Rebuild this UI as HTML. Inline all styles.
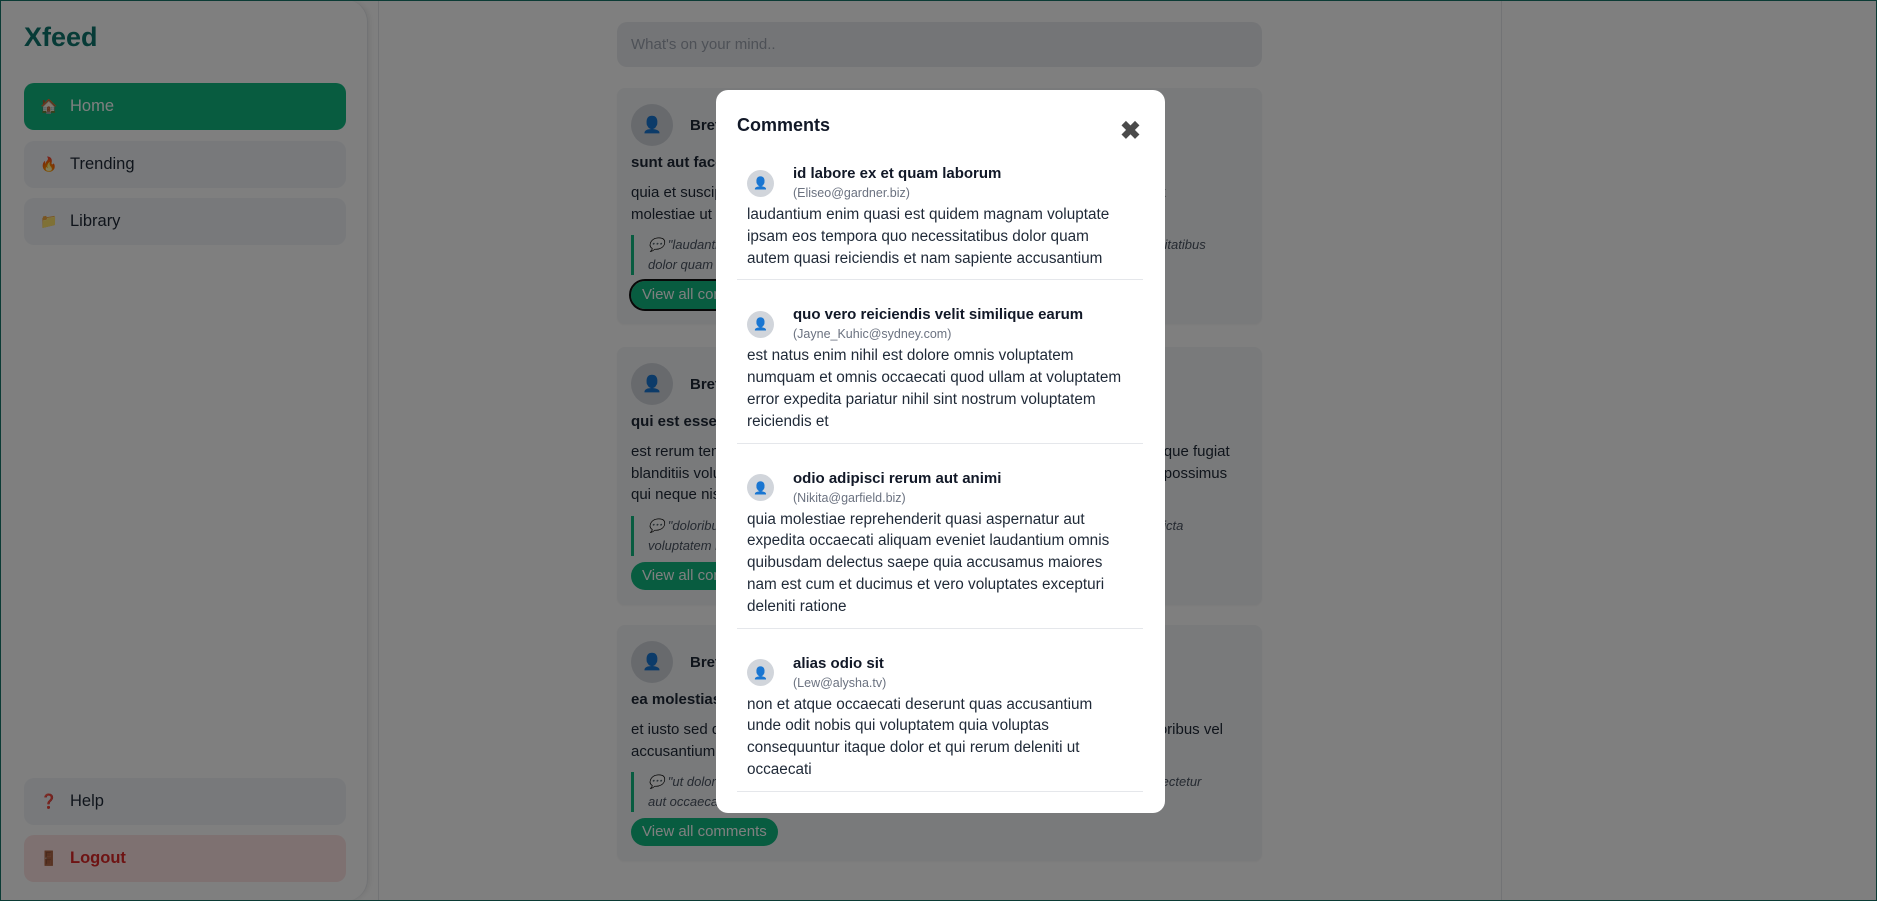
<!DOCTYPE html>
<html><head><meta charset="utf-8"><style>
*{box-sizing:border-box;margin:0;padding:0}
html,body{width:1877px;height:901px;overflow:hidden;background:#fff;font-family:"Liberation Sans",sans-serif;color:#1f2937}
.frame{position:absolute;inset:0;border:1px solid #0b3b35;z-index:50;pointer-events:none}
.side{position:absolute;left:0;top:0;width:368px;height:901px;background:#fff;border-radius:0 22px 22px 0;box-shadow:2px 0 6px rgba(0,0,0,.08);border-right:1px solid #e5e7eb}
.logo{position:absolute;left:24px;top:22px;font-size:27px;font-weight:bold;color:#0f766e}
.nav{position:absolute;left:24px;width:322px;height:47px;border-radius:10px;background:#f1f3f6;font-size:16.5px;line-height:47px;padding-left:16px}
.nav i{font-style:normal;display:inline-block;width:30px;font-size:14px}
.main{position:absolute;left:378px;top:0;width:1124px;height:901px;border-left:1px solid #e5e7eb;border-right:1px solid #e5e7eb}
.inp{position:absolute;left:617px;top:22px;width:645px;height:45px;background:#e9ebee;border-radius:10px;font-size:15px;color:#9ca3af;line-height:45px;padding-left:14px}
.card{position:absolute;left:617px;width:645px;background:#f3f4f6;border-radius:8px;padding:16px 14px 15px;box-shadow:0 1px 2px rgba(0,0,0,.05)}
.hd{height:42px;display:flex;align-items:center}
.av{width:42px;height:42px;border-radius:50%;background:#d1d5db;display:flex;align-items:center;justify-content:center;font-size:16px;color:#1d6fd1}
.nm{margin-left:17px;font-weight:bold;font-size:15px}
.tt{margin-top:7px;font-weight:bold;font-size:15px;line-height:20px;white-space:nowrap}
.bd{margin-top:9px;font-size:15px;line-height:21.5px;white-space:nowrap}
.q{margin-top:10px;border-left:3px solid #10b981;padding-left:14px;font-style:italic;font-size:13px;line-height:20px;color:#4b5563;white-space:nowrap}
.btn{margin-top:6px;display:inline-block;height:28px;line-height:28px;padding:0 11px;border-radius:14px;background:#10b981;color:#fff;font-size:15px}
.ov{position:absolute;inset:0;background:rgba(0,0,0,.5)}
.modal{position:absolute;left:716px;top:90px;width:449px;height:723px;background:#fff;border-radius:12px;padding:23px 22px 0 21px}
.mt{font-size:18px;font-weight:bold;line-height:24px;color:#111827;margin-bottom:2px}
.x{position:absolute;left:1120px;top:118px;font-size:25px;color:#4b4b4b;line-height:26px;font-weight:bold}
.c{border-bottom:1px solid #e5e7eb;padding:25px 0 10px 10px}
.ch{display:flex;align-items:center;height:38px;margin-bottom:2px}
.ca{width:27px;height:27px;border-radius:50%;background:#d1d5db;display:flex;align-items:center;justify-content:center;font-size:12px;color:#1d6fd1}
.cn{margin-left:19px}
.cn b{display:block;font-size:15px;line-height:20px;color:#111827}
.cn span{display:block;font-size:12.5px;line-height:18px;color:#6b7280}
.cb{font-size:15.3px;line-height:21.8px;white-space:nowrap;color:#1f2937}
</style></head><body>
<div class="side">
<div class="logo">Xfeed</div>
<div class="nav" style="top:83px;background:#10b981;color:#fff"><i>🏠</i>Home</div>
<div class="nav" style="top:141px"><i>🔥</i>Trending</div>
<div class="nav" style="top:198px"><i>📁</i>Library</div>
<div class="nav" style="top:778px"><i style="color:#dc2626">❓</i>Help</div>
<div class="nav" style="top:835px;background:#fde2e2;color:#dc2626;font-weight:bold"><i>🚪</i>Logout</div>
</div>
<div class="main"></div>
<div class="inp">What's on your mind..</div>
<div class="card" style="top:88px">
<div class="hd"><div class="av">👤</div><div class="nm">Bret</div></div>
<div class="tt">sunt aut facere repellat provident occaecati excepturi optio reprehenderit</div>
<div class="bd">quia et suscipit suscipit recusandae consequuntur expedita et cum reprehenderit<br>molestiae ut ut quas totam nostrum rerum est autem sunt rem eveniet architecto</div>
<div class="q">💬 "laudantium enim quasi est quidem magnam voluptate ipsam eos tempora quo necessitatibus<br>dolor quam autem quasi reiciendis..."</div>
<div class="btn" style="outline:2px solid #111;outline-offset:0">View all comments</div>
</div>
<div class="card" style="top:347px">
<div class="hd"><div class="av">👤</div><div class="nm">Bret</div></div>
<div class="tt">qui est esse</div>
<div class="bd">est rerum tempore vitae sequi sint nihil reprehenderit dolor beatae ea dolores neque fugiat<br>blanditiis voluptate porro vel nihil molestiae ut reiciendis qui aperiam non debitis possimus<br>qui neque nisi nulla</div>
<div class="q">💬 "doloribus at sed quis culpa deserunt consectetur qui praesentium accusamus fugiat dicta<br>voluptatem rerum ut voluptate..."</div>
<div class="btn">View all comments</div>
</div>
<div class="card" style="top:625px">
<div class="hd"><div class="av">👤</div><div class="nm">Bret</div></div>
<div class="tt">ea molestias quasi exercitationem repellat qui ipsa sit aut</div>
<div class="bd">et iusto sed quo iure voluptatem occaecati omnis eligendi aut ad voluptatem doloribus vel<br>accusantium quis pariatur molestiae porro eius odio et labore et velit aut</div>
<div class="q">💬 "ut dolorum nostrum id quia aut est fuga est inventore vel eligendi explicabo quis consectetur<br>aut occaecati repellat id natus..."</div>
<div class="btn">View all comments</div>
</div>
<div class="ov"></div>
<div class="modal">
<div class="mt">Comments</div>
<div class="c"><div class="ch"><div class="ca">👤</div><div class="cn"><b>id labore ex et quam laborum</b><span>(Eliseo@gardner.biz)</span></div></div>
<div class="cb">laudantium enim quasi est quidem magnam voluptate<br>ipsam eos tempora quo necessitatibus dolor quam<br>autem quasi reiciendis et nam sapiente accusantium</div></div>
<div class="c"><div class="ch"><div class="ca">👤</div><div class="cn"><b>quo vero reiciendis velit similique earum</b><span>(Jayne_Kuhic@sydney.com)</span></div></div>
<div class="cb">est natus enim nihil est dolore omnis voluptatem<br>numquam et omnis occaecati quod ullam at voluptatem<br>error expedita pariatur nihil sint nostrum voluptatem<br>reiciendis et</div></div>
<div class="c"><div class="ch"><div class="ca">👤</div><div class="cn"><b>odio adipisci rerum aut animi</b><span>(Nikita@garfield.biz)</span></div></div>
<div class="cb">quia molestiae reprehenderit quasi aspernatur aut<br>expedita occaecati aliquam eveniet laudantium omnis<br>quibusdam delectus saepe quia accusamus maiores<br>nam est cum et ducimus et vero voluptates excepturi<br>deleniti ratione</div></div>
<div class="c"><div class="ch"><div class="ca">👤</div><div class="cn"><b>alias odio sit</b><span>(Lew@alysha.tv)</span></div></div>
<div class="cb">non et atque occaecati deserunt quas accusantium<br>unde odit nobis qui voluptatem quia voluptas<br>consequuntur itaque dolor et qui rerum deleniti ut<br>occaecati</div></div>
</div>
<div class="x">✖</div>
<div class="frame"></div>
</body></html>
